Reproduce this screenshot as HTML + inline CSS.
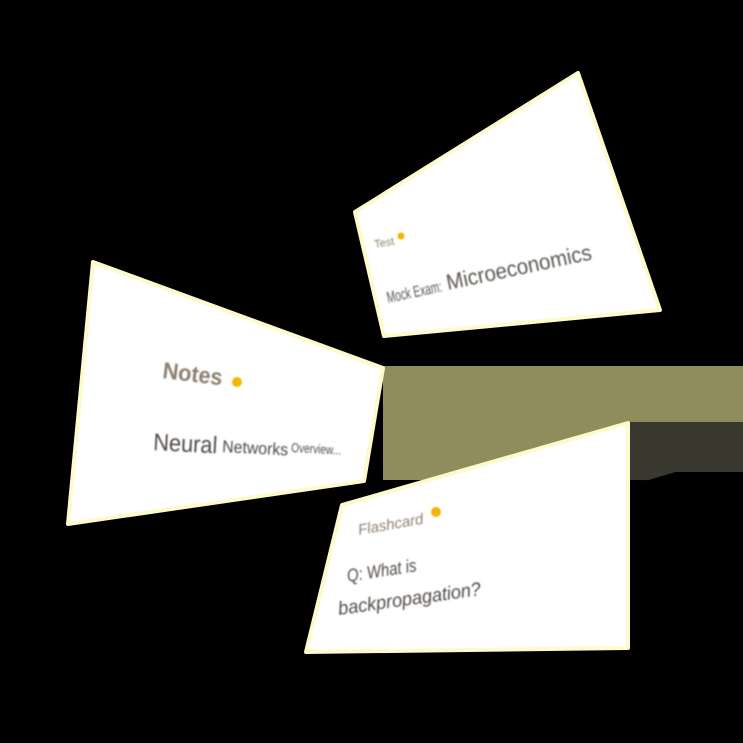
<!DOCTYPE html>
<html><head><style>
html,body{margin:0;padding:0;background:#000;width:743px;height:743px;overflow:hidden}
svg{display:block}
text{font-family:"Liberation Sans",sans-serif}
</style></head><body>
<svg width="743" height="743" viewBox="0 0 743 743">
<defs><filter id="b" x="-10%" y="-10%" width="120%" height="120%"><feGaussianBlur stdDeviation="0.9"/></filter></defs>
<rect width="743" height="743" fill="#000"/>
<rect x="383" y="366" width="360" height="114" fill="#8f8d5b"/>
<polygon points="628,422 743,422 743,472 675,472 628,486" fill="#39382f"/>
<polygon points="628,486 675,472 743,472 743,480 628,480" fill="#000"/>
<polygon points="355,212 578,73 660,310 384,336" fill="#fff" stroke="#fdfacb" stroke-width="4" stroke-linejoin="round"/>
<g filter="url(#b)" fill="#5c5650">
<text x="375" y="248" font-size="11" fill="#8c7f6e" textLength="20" lengthAdjust="spacingAndGlyphs" transform="rotate(-10 375 248)">Test</text>
<circle cx="401" cy="236" r="3.5" fill="#f5b400"/>
<text x="388" y="303" font-size="16" textLength="56" lengthAdjust="spacingAndGlyphs" transform="rotate(-12 388 303)">Mock Exam:</text>
<text x="448" y="290" font-size="22" textLength="148" lengthAdjust="spacingAndGlyphs" transform="rotate(-12 448 290)">Microeconomics</text>
</g>
<polygon points="93,262 383,368 364,481 68,524" fill="#fff" stroke="#fdfacb" stroke-width="4" stroke-linejoin="round"/>
<g filter="url(#b)" fill="#4f4944">
<text x="162" y="378" font-size="23" font-weight="bold" fill="#8c7f6e" textLength="60" lengthAdjust="spacingAndGlyphs" transform="rotate(7 162 378)">Notes</text>
<circle cx="237" cy="382" r="5" fill="#f5b400"/>
<text x="153" y="450" font-size="24" textLength="64" lengthAdjust="spacingAndGlyphs" transform="rotate(3 153 450)">Neural</text>
<text x="222" y="452" font-size="17" textLength="66" lengthAdjust="spacingAndGlyphs" transform="rotate(3 222 452)">Networks</text>
<text x="291" y="452" font-size="13" textLength="50" lengthAdjust="spacingAndGlyphs" transform="rotate(3 291 452)">Overview...</text>
</g>
<polygon points="342,505 628,423 628,648 306,652" fill="#fff" stroke="#fdfacb" stroke-width="4" stroke-linejoin="round"/>
<g filter="url(#b)" fill="#4f4944" font-style="italic">
<text x="359" y="535" font-size="15" fill="#8c7f6e" textLength="66" lengthAdjust="spacingAndGlyphs" transform="rotate(-10 359 535)">Flashcard</text>
<circle cx="436" cy="512" r="5" fill="#f5b400"/>
<text x="348" y="582" font-size="18" textLength="70" lengthAdjust="spacingAndGlyphs" transform="rotate(-9 348 582)">Q: What is</text>
<text x="339" y="615" font-size="19" textLength="144" lengthAdjust="spacingAndGlyphs" transform="rotate(-8 339 615)">backpropagation?</text>
</g>
</svg>
</body></html>
